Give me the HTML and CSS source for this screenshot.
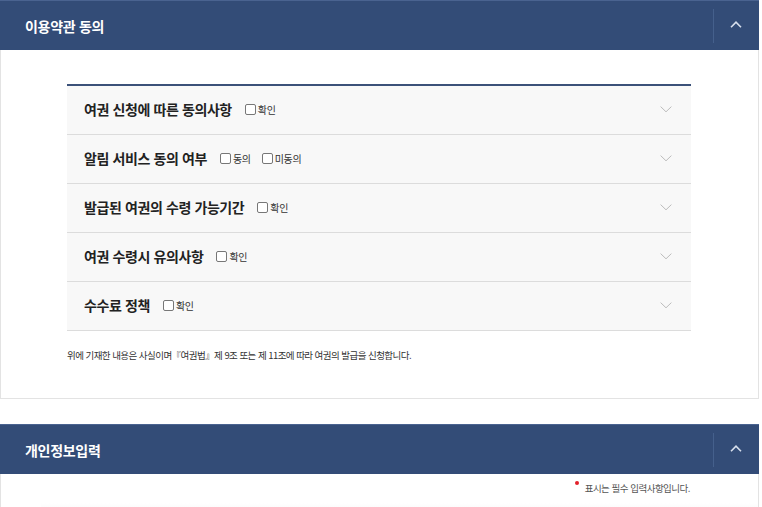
FILE: index.html
```html
<!DOCTYPE html>
<html lang="ko">
<head>
<meta charset="utf-8">
<link rel="stylesheet" href="styles.css">
</head>
<body>
<div class="wrap">
  <section class="sec">
    <div class="sec-head">
      <h2 class="sec-title">이용약관 동의</h2>
      <button class="toggle" type="button" aria-label="접기">
        <svg width="12" height="7" viewBox="0 0 12 7"><path d="M1 6.2 6 1.2l5 5" fill="none" stroke="#d7dfec" stroke-width="1.6"/></svg>
      </button>
    </div>
    <div class="sec-body">
      <ul class="acc">
        <li class="acc-row">
          <span class="acc-title">여권 신청에 따른 동의사항</span>
          <label class="chk"><span class="box"></span>확인</label>
          <svg class="down" width="12" height="7" viewBox="0 0 12 7"><path d="M.6.6 6 5.8 11.4.6" fill="none" stroke="#bcbcbc" stroke-width="1"/></svg>
        </li>
        <li class="acc-row">
          <span class="acc-title">알림 서비스 동의 여부</span>
          <label class="chk"><span class="box"></span>동의</label>
          <label class="chk"><span class="box"></span>미동의</label>
          <svg class="down" width="12" height="7" viewBox="0 0 12 7"><path d="M.6.6 6 5.8 11.4.6" fill="none" stroke="#bcbcbc" stroke-width="1"/></svg>
        </li>
        <li class="acc-row">
          <span class="acc-title">발급된 여권의 수령 가능기간</span>
          <label class="chk"><span class="box"></span>확인</label>
          <svg class="down" width="12" height="7" viewBox="0 0 12 7"><path d="M.6.6 6 5.8 11.4.6" fill="none" stroke="#bcbcbc" stroke-width="1"/></svg>
        </li>
        <li class="acc-row">
          <span class="acc-title">여권 수령시 유의사항</span>
          <label class="chk"><span class="box"></span>확인</label>
          <svg class="down" width="12" height="7" viewBox="0 0 12 7"><path d="M.6.6 6 5.8 11.4.6" fill="none" stroke="#bcbcbc" stroke-width="1"/></svg>
        </li>
        <li class="acc-row">
          <span class="acc-title">수수료 정책</span>
          <label class="chk"><span class="box"></span>확인</label>
          <svg class="down" width="12" height="7" viewBox="0 0 12 7"><path d="M.6.6 6 5.8 11.4.6" fill="none" stroke="#bcbcbc" stroke-width="1"/></svg>
        </li>
      </ul>
      <p class="decl">위에 기재한 내용은 사실이며『여권법』제 9조 또는 제 11조에 따라 여권의 발급을 신청합니다.</p>
    </div>
  </section>

  <section class="sec sec2">
    <div class="sec-head">
      <h2 class="sec-title">개인정보입력</h2>
      <button class="toggle" type="button" aria-label="접기">
        <svg width="12" height="7" viewBox="0 0 12 7"><path d="M1 6.2 6 1.2l5 5" fill="none" stroke="#d7dfec" stroke-width="1.6"/></svg>
      </button>
    </div>
    <div class="sec-body2">
      <p class="req"><span class="dot"></span>표시는 필수 입력사항입니다.</p>
      <div class="form-top"></div>
    </div>
  </section>
</div>
</body>
</html>
```

FILE: styles.css
```css
* { box-sizing: border-box; }
html, body { margin: 0; padding: 0; background: #fff; }
body {
  font-family: "Noto Sans CJK KR", "Noto Sans", sans-serif;
  color: #222;
  overflow: hidden;
}
.wrap { width: 759px; }

.sec-head {
  height: 50px;
  background: #334c77;
  border-top: 1px solid #4a6390;
  display: flex;
  align-items: center;
  justify-content: space-between;
}
.sec-title {
  margin: 0 0 0 25px;
  font-size: 14px;
  font-weight: 700;
  color: #fff;
  letter-spacing: -0.3px;
}
.toggle {
  width: 46px;
  height: 34px;
  border: 0;
  border-left: 1px solid #45608c;
  background: transparent;
  display: flex;
  align-items: center;
  justify-content: center;
  padding: 0 2px 2px 0;
}

.sec-body {
  border: 1px solid #e3e3e3;
  border-top: 0;
  padding: 34px 0 0 66px;
  height: 349px;
}
.acc {
  list-style: none;
  margin: 0;
  padding: 0;
  width: 624px;
  border-top: 2px solid #3b5179;
}
.acc-row {
  height: 49px;
  background: #f8f8f8;
  border-bottom: 1px solid #dcdcdc;
  display: flex;
  align-items: center;
  padding: 0 19px 2px 17px;
}
.acc-title {
  font-size: 14px;
  font-weight: 700;
  color: #222;
  letter-spacing: -0.4px;
  margin-right: 13px;
}
.chk {
  display: flex;
  align-items: center;
  font-size: 10px;
  color: #333;
  margin-right: 11px;
  letter-spacing: -0.3px;
}
.box {
  width: 11px;
  height: 11px;
  border: 1px solid #777;
  border-radius: 2px;
  background: #fff;
  margin-right: 2px;
}
.down { margin-left: auto; }

.decl {
  margin: 17px 0 0 0;
  font-size: 9.5px;
  color: #333;
  letter-spacing: -0.55px;
}

.sec2 { margin-top: 25px; }
.sec-body2 {
  border-left: 1px solid #e3e3e3;
  border-right: 1px solid #e3e3e3;
  height: 40px;
  padding-top: 7px;
}
.req {
  margin: 0 68px 0 0;
  text-align: right;
  font-size: 9.5px;
  color: #555;
  letter-spacing: -0.5px;
}
.dot {
  display: inline-block;
  width: 4px;
  height: 4px;
  background: #e3202a;
  border-radius: 50%;
  vertical-align: 7px;
  margin-right: 6px;
}
.form-top {
  margin: 8px 0 0 40px;
  height: 20px;
  background: linear-gradient(to bottom, #fff, #f1f1f1);
}
```
